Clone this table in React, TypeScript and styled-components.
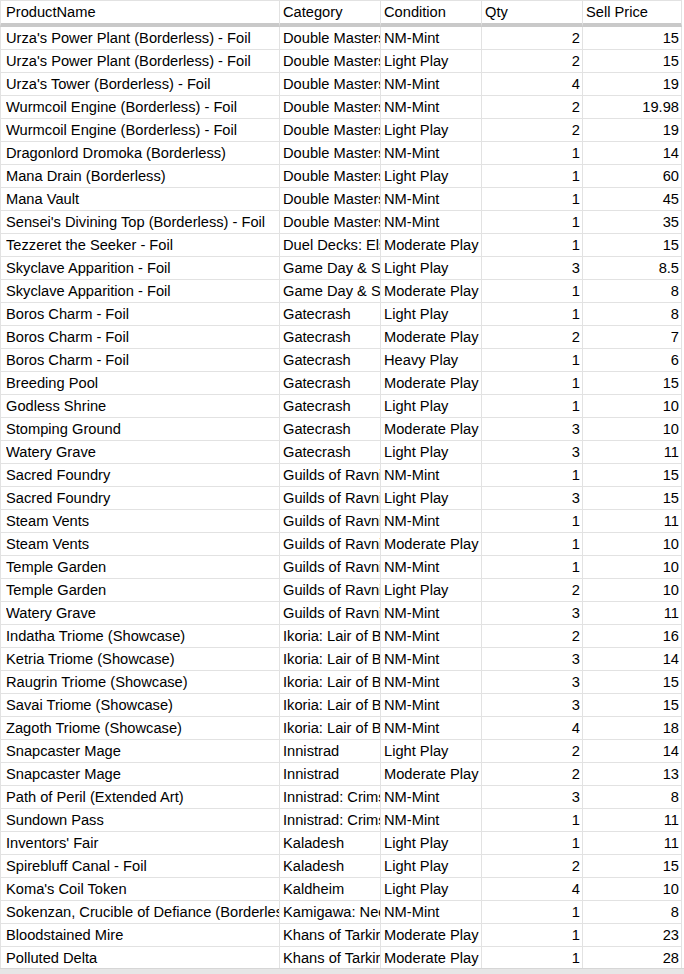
import React from 'react';
import styled, { createGlobalStyle } from 'styled-components';

const GlobalStyle = createGlobalStyle`
    html, body {
        margin: 0;
        padding: 0;
        background: #fff;
    }
`;

type Row = [string, string, string, number, number];

const rows: Row[] = [
    ["Urza's Power Plant (Borderless) - Foil", 'Double Masters', 'NM-Mint', 2, 15],
    ["Urza's Power Plant (Borderless) - Foil", 'Double Masters', 'Light Play', 2, 15],
    ["Urza's Tower (Borderless) - Foil", 'Double Masters', 'NM-Mint', 4, 19],
    ['Wurmcoil Engine (Borderless) - Foil', 'Double Masters', 'NM-Mint', 2, 19.98],
    ['Wurmcoil Engine (Borderless) - Foil', 'Double Masters', 'Light Play', 2, 19],
    ['Dragonlord Dromoka (Borderless)', 'Double Masters', 'NM-Mint', 1, 14],
    ['Mana Drain (Borderless)', 'Double Masters', 'Light Play', 1, 60],
    ['Mana Vault', 'Double Masters', 'NM-Mint', 1, 45],
    ["Sensei's Divining Top (Borderless) - Foil", 'Double Masters', 'NM-Mint', 1, 35],
    ['Tezzeret the Seeker - Foil', 'Duel Decks: Elspeth vs. Tezzeret', 'Moderate Play', 1, 15],
    ['Skyclave Apparition - Foil', 'Game Day & Stores', 'Light Play', 3, 8.5],
    ['Skyclave Apparition - Foil', 'Game Day & Stores', 'Moderate Play', 1, 8],
    ['Boros Charm - Foil', 'Gatecrash', 'Light Play', 1, 8],
    ['Boros Charm - Foil', 'Gatecrash', 'Moderate Play', 2, 7],
    ['Boros Charm - Foil', 'Gatecrash', 'Heavy Play', 1, 6],
    ['Breeding Pool', 'Gatecrash', 'Moderate Play', 1, 15],
    ['Godless Shrine', 'Gatecrash', 'Light Play', 1, 10],
    ['Stomping Ground', 'Gatecrash', 'Moderate Play', 3, 10],
    ['Watery Grave', 'Gatecrash', 'Light Play', 3, 11],
    ['Sacred Foundry', 'Guilds of Ravnica', 'NM-Mint', 1, 15],
    ['Sacred Foundry', 'Guilds of Ravnica', 'Light Play', 3, 15],
    ['Steam Vents', 'Guilds of Ravnica', 'NM-Mint', 1, 11],
    ['Steam Vents', 'Guilds of Ravnica', 'Moderate Play', 1, 10],
    ['Temple Garden', 'Guilds of Ravnica', 'NM-Mint', 1, 10],
    ['Temple Garden', 'Guilds of Ravnica', 'Light Play', 2, 10],
    ['Watery Grave', 'Guilds of Ravnica', 'NM-Mint', 3, 11],
    ['Indatha Triome (Showcase)', 'Ikoria: Lair of Behemoths', 'NM-Mint', 2, 16],
    ['Ketria Triome (Showcase)', 'Ikoria: Lair of Behemoths', 'NM-Mint', 3, 14],
    ['Raugrin Triome (Showcase)', 'Ikoria: Lair of Behemoths', 'NM-Mint', 3, 15],
    ['Savai Triome (Showcase)', 'Ikoria: Lair of Behemoths', 'NM-Mint', 3, 15],
    ['Zagoth Triome (Showcase)', 'Ikoria: Lair of Behemoths', 'NM-Mint', 4, 18],
    ['Snapcaster Mage', 'Innistrad', 'Light Play', 2, 14],
    ['Snapcaster Mage', 'Innistrad', 'Moderate Play', 2, 13],
    ['Path of Peril (Extended Art)', 'Innistrad: Crimson Vow', 'NM-Mint', 3, 8],
    ['Sundown Pass', 'Innistrad: Crimson Vow', 'NM-Mint', 1, 11],
    ["Inventors' Fair", 'Kaladesh', 'Light Play', 1, 11],
    ['Spirebluff Canal - Foil', 'Kaladesh', 'Light Play', 2, 15],
    ["Koma's Coil Token", 'Kaldheim', 'Light Play', 4, 10],
    ['Sokenzan, Crucible of Defiance (Borderless)', 'Kamigawa: Neon Dynasty', 'NM-Mint', 1, 8],
    ['Bloodstained Mire', 'Khans of Tarkir', 'Moderate Play', 1, 23],
    ['Polluted Delta', 'Khans of Tarkir', 'Moderate Play', 1, 28],
];

const columns = [
    { title: 'ProductName', width: 280 },
    { title: 'Category', width: 101 },
    { title: 'Condition', width: 101 },
    { title: 'Qty', width: 101 },
    { title: 'Sell Price', width: 99 },
];

const Sheet = styled.div`
    width: 684px;
    height: 974px;
    display: flex;
    flex-direction: column;
    overflow: hidden;
    font-family: 'Liberation Sans', Arial, sans-serif;
    font-size: 14.667px;
    color: #000;
`;

const GridArea = styled.div`
    flex: 1;
    overflow: hidden;
`;

const Table = styled.table`
    border-collapse: separate;
    border-spacing: 0;
    table-layout: fixed;
    width: 682px;
`;

const HeadCell = styled.th`
    height: 22px;
    padding: 0 0 0 3px;
    text-align: left;
    font-weight: normal;
    white-space: nowrap;
    overflow: hidden;
    border-top: 1px solid #e2e2e2;
    border-right: 1px solid #e2e2e2;
    border-bottom: 4px solid #c9c9c9;

    &:first-child {
        border-left: 1px solid #e2e2e2;
        padding-left: 5px;
    }
`;

const Cell = styled.td<{ $num?: boolean }>`
    height: 22px;
    padding: ${(p) => (p.$num ? '0 2px' : '0 0 0 3px')};
    text-align: ${(p) => (p.$num ? 'right' : 'left')};
    border-right: 1px solid #e2e2e2;
    border-bottom: 1px solid #e2e2e2;
    line-height: 22px;

    &:first-child {
        border-left: 1px solid #e2e2e2;
        padding-left: 5px;
    }
`;

const Clip = styled.div`
    overflow: hidden;
    white-space: nowrap;
    text-overflow: clip;
    height: 22px;
`;

const ScrollTrack = styled.div`
    height: 5px;
    flex-shrink: 0;
    background: #e6e6e6;
    border-top: 1px solid #d6d6d6;
`;

const App = () => {
    return (
        <>
            <GlobalStyle />
            <Sheet>
                <GridArea>
                    <Table>
                        <colgroup>
                            {columns.map((c) => (
                                <col key={c.title} style={{ width: c.width }} />
                            ))}
                        </colgroup>
                        <thead>
                            <tr>
                                {columns.map((c) => (
                                    <HeadCell key={c.title}>{c.title}</HeadCell>
                                ))}
                            </tr>
                        </thead>
                        <tbody>
                            {rows.map((r, i) => (
                                <tr key={i}>
                                    <Cell><Clip>{r[0]}</Clip></Cell>
                                    <Cell><Clip>{r[1]}</Clip></Cell>
                                    <Cell><Clip>{r[2]}</Clip></Cell>
                                    <Cell $num><Clip>{r[3]}</Clip></Cell>
                                    <Cell $num><Clip>{r[4]}</Clip></Cell>
                                </tr>
                            ))}
                        </tbody>
                    </Table>
                </GridArea>
                <ScrollTrack />
            </Sheet>
        </>
    );
};

export default App;
